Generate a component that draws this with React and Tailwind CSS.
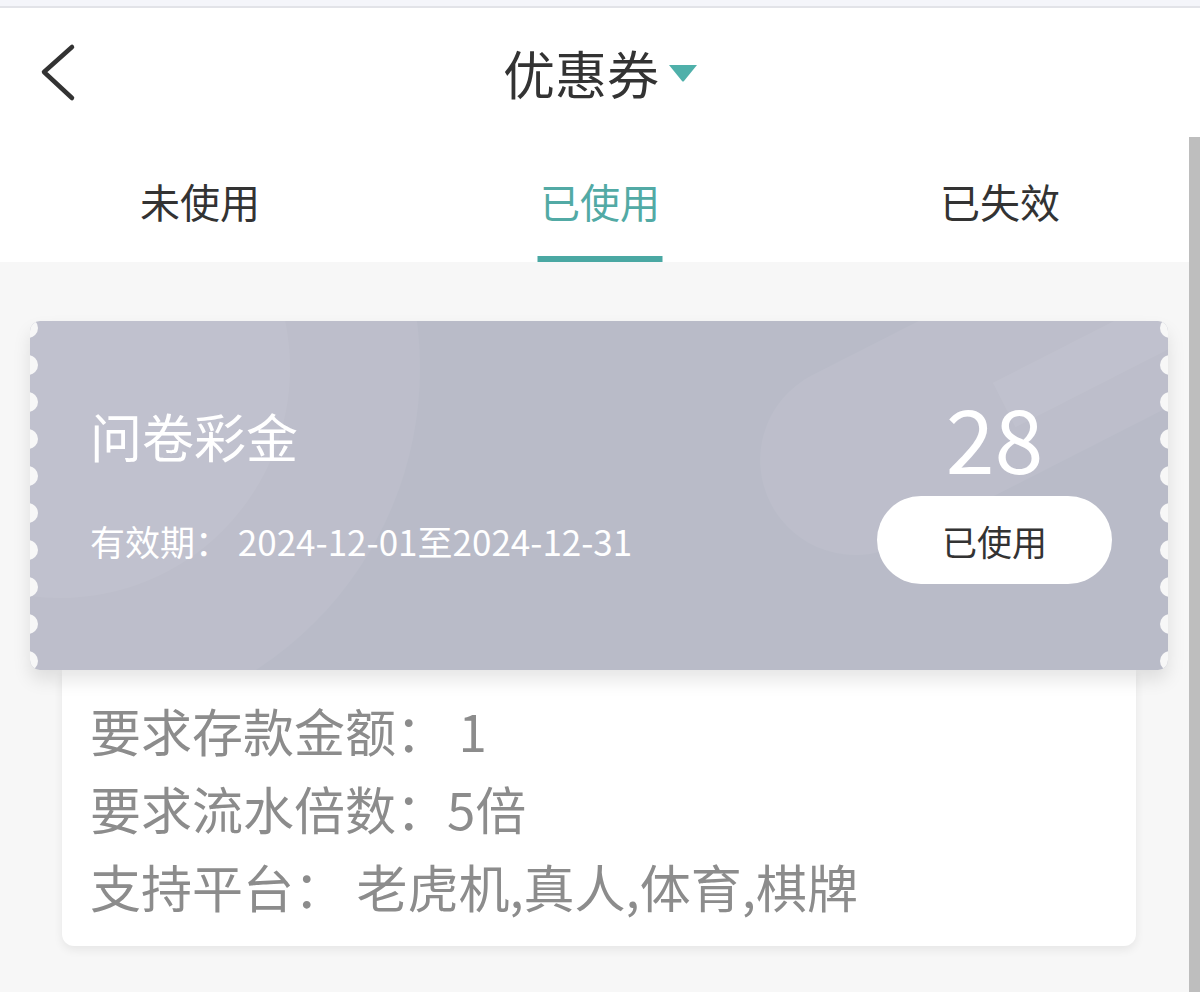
import { useState } from 'react'

const tabs = ['未使用', '已使用', '已失效']
const cuts = [0, 1, 2, 3, 4, 5, 6, 7, 8, 9]

function Notches({ side }) {
  return (
    <div
      className={`absolute top-[-3.5px] flex flex-col gap-[17px] ${
        side === 'left' ? 'left-[-12px]' : 'right-[-12px]'
      }`}
    >
      {cuts.map((i) => (
        <div key={i} className="w-[20px] h-[20px] rounded-full bg-[#f7f7f7]" />
      ))}
    </div>
  )
}

export default function App() {
  const [active, setActive] = useState(1)

  return (
    <div className="relative w-full h-[992px] overflow-hidden bg-[#f7f7f7] font-['Noto_Sans_CJK_SC','Noto_Sans',sans-serif]">
      {/* status strip */}
      <div className="h-[8px] bg-[#f4f5fa] border-b-2 border-[#e2e3e8]" />

      {/* header */}
      <div className="h-[130px] bg-white flex items-center justify-between">
        <div className="w-[200px] pl-[38px] flex items-center">
          <svg width="40" height="60" viewBox="0 0 40 60" fill="none">
            <path d="M34 4 L6 29 L34 55" stroke="#333" strokeWidth="4.5" strokeLinecap="round" strokeLinejoin="round" />
          </svg>
        </div>
        <div className="flex items-center gap-[8px] pl-[2px]">
          <span className="text-[52px] leading-none text-[#333]">优惠券</span>
          <svg width="32" height="20" viewBox="0 0 32 20">
            <path d="M2 2 H30 L17 18 Q16 19 15 18 Z" fill="#4fb0aa" />
          </svg>
        </div>
        <div className="w-[200px]" />
      </div>

      {/* tabs */}
      <div className="h-[124px] bg-white flex">
        {tabs.map((t, i) => (
          <button
            key={t}
            onClick={() => setActive(i)}
            className="relative flex-1 flex items-center justify-center pt-[2px]"
          >
            <span className={`text-[40px] leading-none ${active === i ? 'text-[#52aaa5]' : 'text-[#333]'}`}>{t}</span>
            {active === i && (
              <div className="absolute bottom-0 left-1/2 -translate-x-1/2 w-[125px] h-[6px] bg-[#4aa8a3]" />
            )}
          </button>
        ))}
      </div>

      {/* content */}
      <div className="pt-[59px] pl-[30px] pr-[32px]">
        <div className="relative z-10 h-[349px] rounded-[10px] bg-[#b9bbc8] overflow-hidden shadow-[0_10px_18px_rgba(0,0,0,0.10)]">
          {/* decoration */}
          <div className="absolute left-[-330px] top-[-313px] w-[720px] h-[720px] rounded-full bg-white/[0.05]" />
          <div className="absolute left-[-200px] top-[-183px] w-[460px] h-[460px] rounded-full bg-white/[0.05]" />
          <div className="absolute left-[710px] top-[-40px] w-[560px] h-[190px] rounded-full bg-white/[0.05] rotate-[-27deg]" />
          <div className="absolute left-[960px] top-[0px] w-[260px] h-[50px] bg-white/[0.06] rotate-[-27deg]" />

          <div className="relative pt-[70px] pl-[60px] pr-[56px]">
            <div className="h-[90px] flex items-center justify-between">
              <span className="text-[52px] leading-none text-white">问卷彩金</span>
              <div className="w-[235px] text-center text-[88px] leading-none text-white">28</div>
            </div>
            <div className="mt-[15px] h-[88px] flex items-center justify-between">
              <span className="text-[35px] leading-none text-white">有效期：&nbsp;2024-12-01至2024-12-31</span>
              <button className="w-[235px] h-[88px] rounded-full bg-white flex items-center justify-center text-[35px] leading-none text-[#333]">
                已使用
              </button>
            </div>
          </div>

          <Notches side="left" />
          <Notches side="right" />
        </div>

        <div className="mx-[32px] pt-[21px] pb-[21px] pl-[28px] bg-white rounded-b-[12px] shadow-[0_4px_10px_rgba(0,0,0,0.07)]">
          <div className="text-[51px] leading-[78px] text-[#8c8c8c]">要求存款金额：&nbsp;1</div>
          <div className="text-[51px] leading-[78px] text-[#8c8c8c]">要求流水倍数：5倍</div>
          <div className="text-[51px] leading-[78px] text-[#8c8c8c]">支持平台：&nbsp;老虎机,真人,体育,棋牌</div>
        </div>
      </div>

      {/* scrollbar */}
      <div className="absolute right-0 top-[137px] bottom-0 w-[11px] bg-[#bebebe]" />
    </div>
  )
}
